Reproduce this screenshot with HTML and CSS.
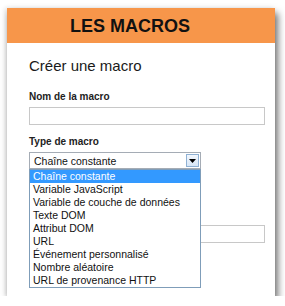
FILE: index.html
```html
<!DOCTYPE html>
<html lang="fr">
<head>
  <meta charset="UTF-8" />
  <title>Les macros</title>
  <link rel="stylesheet" href="styles.css">
</head>
<body>
  <div class="card">
    <header class="banner">LES MACROS</header>
    <main class="content">
      <h2>Créer une macro</h2>

      <label class="field-label">Nom de la macro</label>
      <div class="text-input wide"></div>

      <label class="field-label">Type de macro</label>
      <div class="select-wrap">
        <div class="select">
          <span>Chaîne constante</span>
          <span class="select-btn">
            <svg width="7" height="4" viewBox="0 0 7 4"><path d="M0 0h7L3.5 4z" fill="#000"/></svg>
          </span>
        </div>
        <ul class="dropdown">
          <li class="active">Chaîne constante</li>
          <li>Variable JavaScript</li>
          <li>Variable de couche de données</li>
          <li>Texte DOM</li>
          <li>Attribut DOM</li>
          <li>URL</li>
          <li>Événement personnalisé</li>
          <li>Nombre aléatoire</li>
          <li>URL de provenance HTTP</li>
        </ul>
      </div>

      <div class="text-input wide"></div>
    </main>
  </div>
</body>
</html>
```

FILE: styles.css
```css
body {
  margin: 0;
  background-color: #fff;
  font-family: 'Liberation Sans', Arial, sans-serif;
  color: #222;
}

.card {
  margin: 8px 0 0 7px;
  width: 268px;
  height: 288px;
  background-color: #fff;
  box-shadow: 3px 5px 7px rgba(0, 0, 0, 0.55), -2px 0 5px rgba(0, 0, 0, 0.12);
}

.banner {
  height: 35px;
  line-height: 36px;
  background-color: #f7964a;
  font-weight: bold;
  font-size: 18px;
  color: #111;
  text-align: center;
  padding-right: 22px;
}

.content {
  padding: 14px 10px 0 22px;
}

.content h2 {
  margin: 0 0 17px;
  font-size: 15px;
  font-weight: normal;
  color: #1a1a1a;
}

.field-label {
  display: block;
  font-size: 10px;
  font-weight: bold;
  color: #222;
  margin-bottom: 5px;
}

.text-input {
  height: 16px;
  border: 1px solid #c8c8c8;
  margin-bottom: 11px;
}

.wide {
  width: 234px;
}

.select-wrap {
  position: relative;
  width: 172px;
  margin-bottom: 56px;
}

.select {
  height: 15px;
  border: 1px solid #a5acb5;
  display: flex;
  align-items: center;
  justify-content: space-between;
  font-size: 10.5px;
  padding-left: 4px;
  color: #111;
}

.select-btn {
  width: 13px;
  height: 13px;
  margin-right: 1px;
  box-sizing: border-box;
  border: 1px solid #8fb1d4;
  background: linear-gradient(#f2f7fd, #d7e6f7);
  display: flex;
  align-items: center;
  justify-content: center;
}

.dropdown {
  position: absolute;
  top: 17px;
  left: 0;
  width: 172px;
  box-sizing: border-box;
  margin: 0;
  padding: 0;
  list-style: none;
  background-color: #fff;
  border: 1px solid #7f9db9;
  z-index: 2;
}

.dropdown li {
  font-size: 10.5px;
  line-height: 13px;
  padding-left: 3px;
  color: #111;
}

.dropdown li.active {
  background-color: #3399ff;
  color: #fff;
}
```
